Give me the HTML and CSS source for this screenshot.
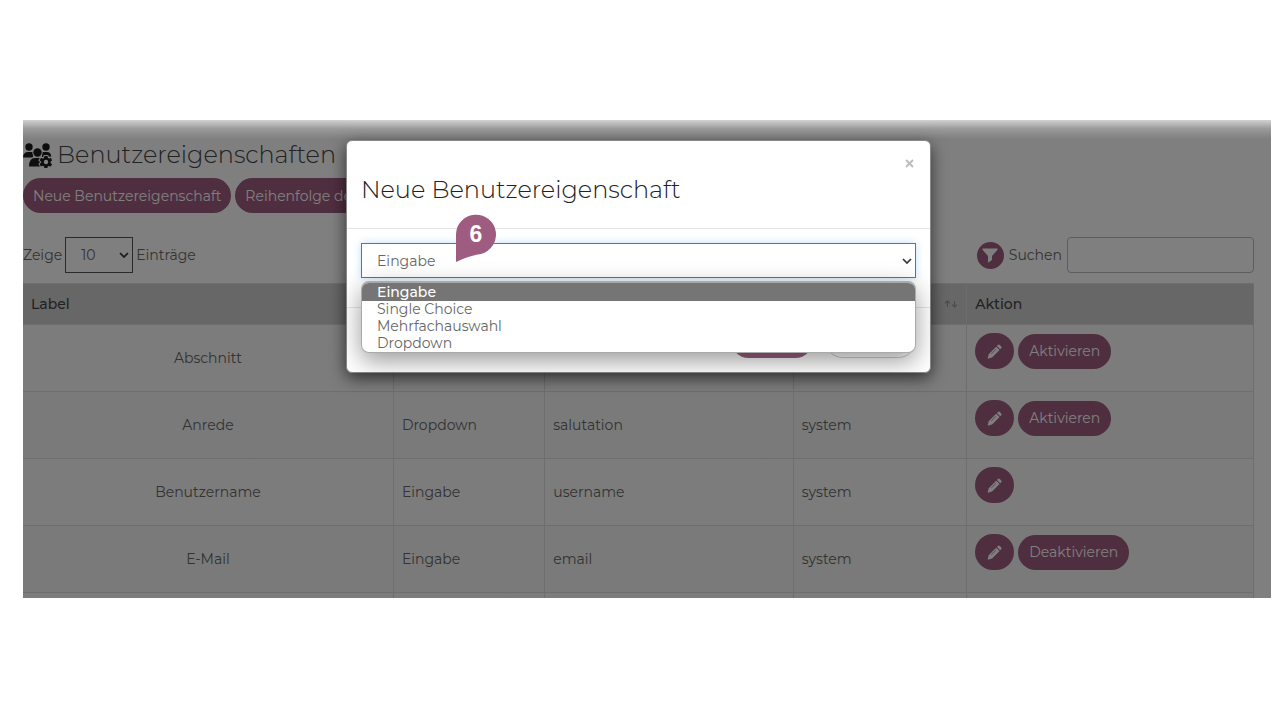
FILE: index.html
```html
<!DOCTYPE html>
<html lang="de">
<head>
<meta charset="utf-8">
<title>Benutzereigenschaften</title>
<link rel="stylesheet" href="styles.css">
</head>
<body>
<svg class="sprite" aria-hidden="true">
  <symbol id="pencil" viewBox="0 0 16 16">
    <path fill="currentColor" d="M10.600 2 11.600 1q1-.9 2 0l1.600 1.600q.8.9 0 1.900l-1.100 1.100zM9.800 2.800l3.600 3.600-8 8L.6 15.600l1.200-4.800z"/>
    <path d="M4.500 10.600 9.600 5.600" stroke="#9e5c80" stroke-width=".7" fill="none"/>
  </symbol>
  <symbol id="chevron" viewBox="0 0 10 6"><path d="m1 1 4 4 4-4" fill="none" stroke="currentColor" stroke-width="1.700"/></symbol>
  <symbol id="sort" viewBox="0 0 14 10"><path d="M3.500 8V2M1 4.300l2.500-2.500L6 4.300M10.500 2v6M8 5.700l2.500 2.500L13 5.700" fill="none" stroke="currentColor" stroke-width="1.200"/></symbol>
</svg>
<div class="stage">
  <main class="page">
    <h1 class="title">
      <svg class="title-icon" viewBox="0 0 29 25" aria-hidden="true">
        <g fill="currentColor">
          <circle cx="6" cy="4" r="3.700"/><circle cx="23" cy="4" r="3.700"/>
          <path d="M0 14.500Q.3 9 5 9h5v5.500zM19 14V9h5q4 0 4.300 4.500z"/>
        </g>
        <g fill="currentColor" stroke="#fff" stroke-width="2" paint-order="stroke">
          <path d="M6 23.500Q6 15 12 15h5q3 0 4 2v6.500z"/>
          <circle cx="14.500" cy="9.500" r="4.200"/>
          <path fill-rule="evenodd" d="m21.500 13h3l.5 2 1 .5 2-.6 1 2.500-1.500 1.400v1l1.500 1.400-1.200 2.300-2-.6-1 .6-.5 1.500h-2.900l-.5-1.700-1-.5-2 .6-1.300-2.500 1.600-1.400v-.8l-1.600-1.400 1.300-2.300 2 .6 1-.6z"/>
        </g>
        <circle cx="23" cy="19" r="2.200" fill="#fff"/>
      </svg>
      Benutzereigenschaften
    </h1>
    <div class="actions">
      <button class="btn" type="button">Neue Benutzereigenschaft</button>
      <button class="btn" type="button">Reihenfolge der</button>
    </div>
    <div class="toolbar">
      <label class="length">Zeige
        <span class="select-wrap">
          <select class="length-select"><option>10</option></select>
          <svg class="chevron"><use href="#chevron"/></svg>
        </span>
        Einträge</label>
      <div class="search">
        <button class="filter" type="button" aria-label="Filter">
          <svg width="16" height="15" viewBox="0 0 16 15"><path d="M.5.500h15v1.200L10 8v4l-4 2.800V8L.5 1.700z" fill="currentColor"/></svg>
        </button>
        <label for="search">Suchen</label>
        <input id="search" class="search-input" type="search">
      </div>
    </div>
    <table class="grid">
      <colgroup><col class="c-label"><col class="c-type"><col class="c-name"><col class="c-origin"><col></colgroup>
      <thead>
        <tr><th>Label</th><th></th><th></th><th class="sortable"><svg class="sort"><use href="#sort"/></svg></th><th>Aktion</th></tr>
      </thead>
      <tbody>
        <tr><td>Abschnitt</td><td></td><td></td><td></td>
          <td><div class="row-actions"><button class="btn icon" type="button" aria-label="Bearbeiten"><svg><use href="#pencil"/></svg></button><button class="btn" type="button">Aktivieren</button></div></td></tr>
        <tr><td>Anrede</td><td>Dropdown</td><td>salutation</td><td>system</td>
          <td><div class="row-actions"><button class="btn icon" type="button" aria-label="Bearbeiten"><svg><use href="#pencil"/></svg></button><button class="btn" type="button">Aktivieren</button></div></td></tr>
        <tr><td>Benutzername</td><td>Eingabe</td><td>username</td><td>system</td>
          <td><div class="row-actions"><button class="btn icon" type="button" aria-label="Bearbeiten"><svg><use href="#pencil"/></svg></button></div></td></tr>
        <tr><td>E-Mail</td><td>Eingabe</td><td>email</td><td>system</td>
          <td><div class="row-actions"><button class="btn icon" type="button" aria-label="Bearbeiten"><svg><use href="#pencil"/></svg></button><button class="btn" type="button">Deaktivieren</button></div></td></tr>
        <tr><td></td><td></td><td></td><td></td><td></td></tr>
      </tbody>
    </table>
  </main>
  <div class="backdrop"></div>
  <div class="modal" role="dialog" aria-labelledby="modal-title">
    <header class="modal-header">
      <button class="close" type="button" aria-label="Schließen"><svg width="9" height="9" viewBox="0 0 9 9"><path d="m1 1 7 7M8 1 1 8" stroke="currentColor" stroke-width="1.800"/></svg></button>
      <h2 id="modal-title" class="modal-title">Neue Benutzereigenschaft</h2>
    </header>
    <div class="modal-body">
      <div class="field">
        <select class="type-select" aria-label="Typ"><option>Eingabe</option><option>Single Choice</option><option>Mehrfachauswahl</option><option>Dropdown</option></select>
        <svg class="chevron"><use href="#chevron"/></svg>
        <ul class="menu" role="listbox">
          <li class="selected" role="option" aria-selected="true">Eingabe</li>
          <li role="option">Single Choice</li>
          <li role="option">Mehrfachauswahl</li>
          <li role="option">Dropdown</li>
        </ul>
        <div class="marker">
          <svg class="marker-shape" viewBox="0 0 40 49" aria-hidden="true"><path d="M0 48V20a20 20 0 1 1 25 20Q12 42 0 48z" fill="#9e5c80"/></svg>
          <span class="marker-number">6</span>
        </div>
      </div>
    </div>
    <footer class="modal-footer">
      <button class="btn save" type="button" aria-label="Speichern"></button>
      <button class="btn cancel" type="button" aria-label="Abbrechen"></button>
    </footer>
  </div>
</div>
</body>
</html>
```
FILE: styles.css
```css
* { box-sizing: border-box; }
body {
  margin: 0;
  padding: 120px 9px 122px 23px;
  background: #fff;
  color: #666;
  font: 14px/20px Montserrat, Inter, sans-serif;
}
button, input, select { font: inherit; color: inherit; }
.sprite { display: none; }
.stage {
  position: relative;
  height: calc(100vh - 242px);
  overflow: hidden;
}
.page { padding: 18px 17px 0 0; }
.title {
  display: flex;
  align-items: center;
  gap: 5px;
  margin: 0;
  font-size: 24px;
  line-height: 34px;
  font-weight: 300;
  color: #444;
}
.title-icon { width: 29px; height: 25px; color: #1c1c1c; }
.actions { display: flex; gap: 4px; padding-top: 6px; }
.btn {
  height: 35px;
  padding: 0 10px;
  border: 0;
  border-radius: 18px;
  background: #9e5c80;
  color: #fff;
  white-space: nowrap;
}
.toolbar {
  display: flex;
  justify-content: space-between;
  align-items: center;
  padding: 24px 0 10px;
}
.length { display: flex; align-items: center; gap: 3px; }
.search { display: flex; align-items: center; gap: 5px; }
.select-wrap, .field { position: relative; }
.select-wrap { display: block; }
.length-select {
  appearance: none;
  display: block;
  width: 68px;
  height: 36px;
  padding: 0 15px;
  border: 1px solid #555;
  border-radius: 0;
  background: transparent;
}
.chevron {
  position: absolute;
  right: 4px;
  top: 15px;
  width: 10px;
  height: 6px;
  color: #333;
  pointer-events: none;
}
.filter {
  display: grid;
  place-items: center;
  width: 27px;
  height: 27px;
  padding: 0;
  border: 0;
  border-radius: 50%;
  background: #9e5c80;
  color: #fff;
}
.search-input {
  width: 187px;
  height: 36px;
  border: 1px solid #bbb;
  border-radius: 4px;
  background: transparent;
}
.grid {
  width: 100%;
  table-layout: fixed;
  border-collapse: collapse;
  border: 1px solid #ddd;
  border-left: 0;
}
.c-label { width: 30.1%; }
.c-type { width: 12.3%; }
.c-name { width: 20.2%; }
.c-origin { width: 14.1%; }
.grid th {
  height: 41px;
  padding: 0 8px;
  background: #cecece;
  border-right: 1px solid #d8d8d8;
  text-align: left;
  font-weight: 500;
  color: #444;
}
.grid .sortable { text-align: right; }
.sort { width: 14px; height: 10px; color: #999; }
.grid td {
  height: 67px;
  padding: 0 8px;
  border: 1px solid #ddd;
}
.grid td:first-child { border-left: 0; text-align: center; }
.grid tbody tr:nth-child(odd) { background: #f9f9f9; }
.grid tbody tr:nth-child(even) { background: #f4f4f4; }
.row-actions { display: flex; align-items: center; gap: 4px; padding-bottom: 14px; }
.row-actions .btn { padding: 0 11px; }
.row-actions .icon { display: grid; place-items: center; width: 39px; height: 36px; }
.icon svg { width: 15px; height: 15px; }
.backdrop {
  position: absolute;
  inset: 0;
  background: linear-gradient(rgba(0, 0, 0, .18), rgba(0, 0, 0, .4) 9px, rgba(0, 0, 0, .5) 19px);
}
.modal {
  position: absolute;
  top: 20px;
  left: calc(50% - 301px);
  width: 585px;
  border: 1px solid #888;
  border-radius: 6px;
  background: #fff;
  box-shadow: 0 5px 16px rgba(0, 0, 0, .6);
}
.modal-header { padding: 15px 15px 15px 14px; border-bottom: 1px solid #e5e5e5; }
.close {
  display: grid;
  place-items: center;
  width: 11px;
  height: 15px;
  margin-left: auto;
  padding: 0;
  border: 0;
  background: none;
  color: #bbb;
}
.modal-title {
  margin: 0;
  padding: 4px 0 8px;
  font-size: 24px;
  line-height: 30px;
  font-weight: 300;
  color: #222;
}
.modal-body { padding: 14px 14px 29px; }
.type-select {
  appearance: none;
  display: block;
  width: 100%;
  height: 35px;
  padding: 0 15px;
  border: 1px solid #68737b;
  border-radius: 0;
  background: #fff;
  box-shadow: 0 0 8px rgba(102, 175, 233, .4);
  outline: 0;
}
.menu {
  position: absolute;
  top: 38px;
  left: 0;
  right: 0;
  margin: 0;
  padding: 0;
  overflow: hidden;
  list-style: none;
  border: 1px solid #aaa;
  border-top-width: 2px;
  border-radius: 8px;
  background: #fff;
  box-shadow: 0 8px 24px rgba(0, 0, 0, .4);
  line-height: 17px;
}
.menu li { padding-left: 15px; }
.menu .selected {
  padding-top: 1px;
  background: #757575;
  color: #fff;
  font-weight: 500;
}
.marker {
  position: absolute;
  top: -29px;
  left: 95px;
  width: 40px;
}
.marker-shape { display: block; width: 40px; height: 49px; }
.marker-number {
  position: absolute;
  inset: 0 0 auto 0;
  text-align: center;
  font: bold 23px/41px "Liberation Sans", sans-serif;
  color: #fff;
}
.modal-footer {
  display: flex;
  justify-content: flex-end;
  gap: 12px;
  padding: 15px 14px 14px;
  border-top: 1px solid #e5e5e5;
  border-radius: 0 0 6px 6px;
}
.save { width: 82px; }
.cancel { width: 91px; border: 1px solid #ccc; background: #fff; }
```
